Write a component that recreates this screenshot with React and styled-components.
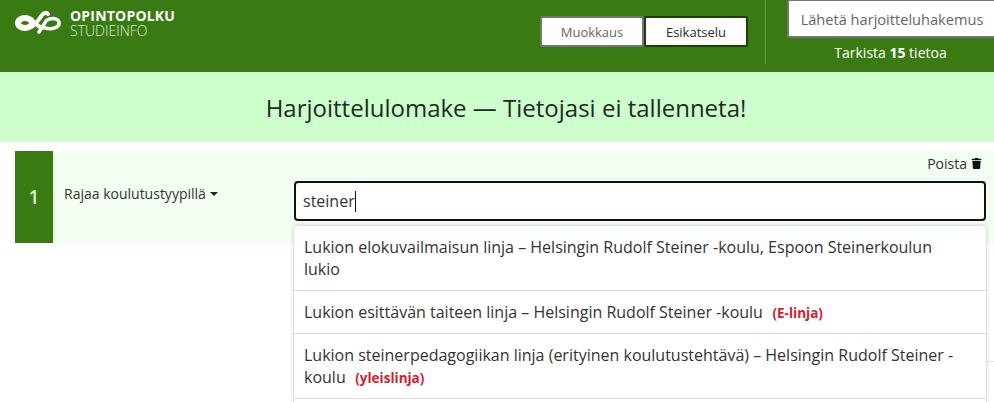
import styled, { createGlobalStyle } from 'styled-components';
import { FaTrash } from 'react-icons/fa';

const GlobalStyle = createGlobalStyle`
  html, body {
    margin: 0;
    padding: 0;
    background: #fff;
    font-family: 'Open Sans', 'Liberation Sans', sans-serif;
    color: #2a2a2a;
    overflow: hidden;
  }
`;

const Page = styled.div`
  width: 994px;
  height: 402px;
  overflow: hidden;
`;

const Header = styled.header`
  height: 72px;
  box-sizing: border-box;
  background: #3a7a12;
  display: flex;
  justify-content: space-between;
  padding-left: 15px;
`;

const Brand = styled.div`
  display: flex;
  gap: 8px;
  padding-top: 8px;
`;

const LogoMark = styled.svg`
  margin-top: 3px;
`;

const BrandText = styled.div`
  color: #fff;
  font-size: 14px;
  line-height: 15px;
`;

const BrandName = styled.div`
  font-weight: 700;
  letter-spacing: 0.2px;
`;

const BrandSub = styled.div`
  font-weight: 300;
  color: #dcefd0;
`;

const HeaderRight = styled.div`
  display: flex;
  align-items: flex-start;
`;

const Toggle = styled.div`
  display: flex;
  margin-top: 16px;
  margin-right: 17px;
`;

const ToggleButton = styled.div`
  width: 104px;
  height: 31px;
  box-sizing: border-box;
  background: #fff;
  border: 2px solid ${p => (p.$active ? '#1f3f0a' : '#757575')};
  border-radius: 2px;
  color: ${p => (p.$active ? '#2a2a2a' : '#666')};
  font-size: 13px;
  display: flex;
  align-items: center;
  justify-content: center;
`;

const SendBox = styled.div`
  width: 229px;
  height: 64px;
  box-sizing: border-box;
  border-left: 1px solid #6d9a50;
  padding-left: 21px;
`;

const SendButton = styled.div`
  width: 208px;
  height: 38px;
  box-sizing: border-box;
  background: #fff;
  border: 2px solid #757575;
  border-top: 1px solid #757575;
  border-right: none;
  border-radius: 2px 0 0 2px;
  color: #666;
  font-size: 14.6px;
  display: flex;
  align-items: center;
  justify-content: center;
`;

const SendNote = styled.div`
  color: #fff;
  font-size: 14px;
  line-height: 18px;
  margin-top: 6px;
  text-align: center;

  b {
    font-weight: 700;
  }
`;

const Banner = styled.div`
  height: 70px;
  box-sizing: border-box;
  padding-left: 18px;
  background: #ccffcc;
  display: flex;
  align-items: center;
  justify-content: center;
  font-size: 24px;
  color: #1e2a1e;
`;

const Question = styled.section`
  position: relative;
  margin: 9px 0 0 15px;
  height: 92px;
  background: #f2fff2;
  display: flex;
`;

const NextRule = styled.div`
  margin: 118px 0 0 294px;
  border-top: 1px solid #e6e6e6;
`;

const Number = styled.div`
  width: 38px;
  background: #3a7a12;
  color: #dcefd0;
  font-size: 19px;
  font-weight: 600;
  display: flex;
  align-items: center;
  justify-content: center;
`;

const FilterLabel = styled.div`
  width: 241px;
  padding: 34px 0 0 11px;
  box-sizing: border-box;
  font-size: 14px;
  line-height: 18px;
  color: #333;
`;

const Caret = styled.span`
  display: inline-block;
  margin-left: 4px;
  vertical-align: 3px;
  border-top: 4px solid #222;
  border-left: 4px solid transparent;
  border-right: 4px solid transparent;
`;

const Main = styled.div`
  flex: 1;
  padding-right: 8px;
`;

const Remove = styled.div`
  height: 30px;
  box-sizing: border-box;
  padding: 0 4px 6px 0;
  display: flex;
  align-items: center;
  justify-content: flex-end;
  gap: 4px;
  font-size: 14px;
  color: #333;
`;

const SearchInput = styled.div`
  height: 40px;
  box-sizing: border-box;
  background: #fff;
  border: 2px solid #111;
  border-radius: 4px;
  padding-left: 7px;
  display: flex;
  align-items: center;
  font-size: 16px;
  color: #333;
`;

const TextCursor = styled.span`
  display: inline-block;
  width: 1px;
  height: 21px;
  background: #111;
`;

const Suggestions = styled.ul`
  position: absolute;
  top: 75px;
  left: 279px;
  width: 692px;
  margin: 0;
  padding: 0 0 12px;
  list-style: none;
  background: #fff;
  border-radius: 4px 4px 0 0;
  box-shadow: 0 0 4px rgba(0, 0, 0, 0.25);
`;

const Suggestion = styled.li`
  padding: 10px 20px 10px 10px;
  border-bottom: 1px solid #dedede;
  font-size: 16px;
  line-height: 22px;
  color: #333;
`;

const Tag = styled.span`
  margin-left: 6px;
  font-size: 13.5px;
  line-height: 1;
  font-weight: 700;
  color: #d3202f;
`;

const Logo = () => (
  <LogoMark width="47" height="23" viewBox="0 0 47 23" fill="none" stroke="#fff" strokeLinecap="round">
    <ellipse cx="10" cy="12" rx="7" ry="5" strokeWidth="6" />
    <path d="M16 8c3 3 6 7 11 9" strokeWidth="4" />
    <path d="M16 16c5-2 8-8 11-12 2-2.500 5-2.500 6-1" strokeWidth="4" />
    <path d="M24 21l7-11c3-3 11-4 13 1 1 5-6 8-14 6" strokeWidth="3.5" />
  </LogoMark>
);

const App = () => (
  <Page>
    <GlobalStyle />
    <Header>
      <Brand>
        <Logo />
        <BrandText>
          <BrandName>OPINTOPOLKU</BrandName>
          <BrandSub>STUDIEINFO</BrandSub>
        </BrandText>
      </Brand>
      <HeaderRight>
        <Toggle>
          <ToggleButton>Muokkaus</ToggleButton>
          <ToggleButton $active>Esikatselu</ToggleButton>
        </Toggle>
        <SendBox>
          <SendButton>Lähetä harjoitteluhakemus</SendButton>
          <SendNote>
            Tarkista <b>15</b> tietoa
          </SendNote>
        </SendBox>
      </HeaderRight>
    </Header>
    <Banner>Harjoittelulomake — Tietojasi ei tallenneta!</Banner>
    <Question>
      <Number>1</Number>
      <FilterLabel>
        Rajaa koulutustyypillä
        <Caret />
      </FilterLabel>
      <Main>
        <Remove>
          Poista <FaTrash size={11} color="#111" />
        </Remove>
        <SearchInput>
          steiner
          <TextCursor />
        </SearchInput>
      </Main>
      <Suggestions>
        <Suggestion>
          Lukion elokuvailmaisun linja – Helsingin Rudolf Steiner -koulu, Espoon Steinerkoulun lukio
        </Suggestion>
        <Suggestion>
          Lukion esittävän taiteen linja – Helsingin Rudolf Steiner -koulu
          <Tag> (E-linja)</Tag>
        </Suggestion>
        <Suggestion>
          Lukion steinerpedagogiikan linja (erityinen koulutustehtävä) – Helsingin Rudolf Steiner -koulu
          <Tag> (yleislinja)</Tag>
        </Suggestion>
      </Suggestions>
    </Question>
    <NextRule />
  </Page>
);

export default App;
